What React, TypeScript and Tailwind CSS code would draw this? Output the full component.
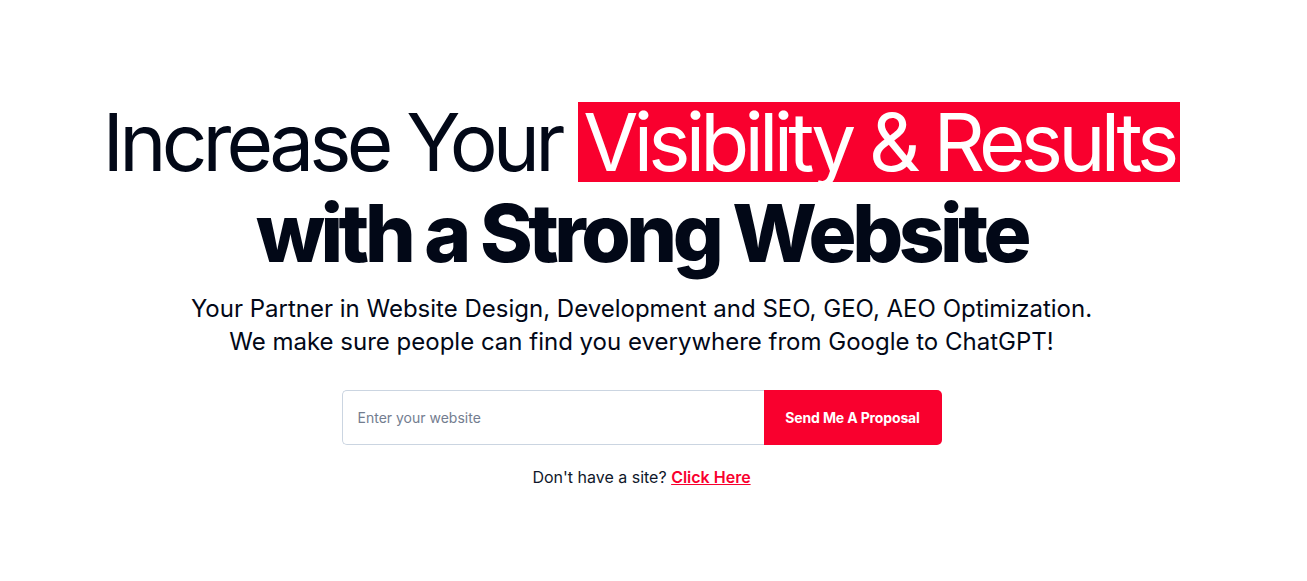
export default function App() {
  return (
    <div
      className="min-h-screen bg-white flex flex-col items-center pr-[24px] text-[#020817]"
      style={{ fontFamily: 'Inter, "Noto Sans", sans-serif' }}
    >
      <h1 className="mt-[96px] flex flex-col items-center text-center text-[80px] leading-[91px]">
        <span className="font-normal tracking-[-0.06em] whitespace-nowrap">
          Increase Your{' '}
          <span className="inline-block leading-none bg-[#f9002e] text-white pl-[5px] pr-[6px]">
            Visibility &amp; Results
          </span>
        </span>
        <span className="font-extrabold tracking-[-0.056em] whitespace-nowrap">with a Strong Website</span>
      </h1>
      <p className="mt-[14px] text-[24px] leading-[33px] text-center">
        Your Partner in Website Design, Development and SEO, GEO, AEO Optimization.
        <br />
        We make sure people can find you everywhere from Google to ChatGPT!
      </p>
      <form className="mt-[32px] flex w-[600px] h-[55px]" onSubmit={(e) => e.preventDefault()}>
        <input
          type="text"
          placeholder="Enter your website"
          className="flex-1 min-w-0 border border-[#cbd5e1] border-r-0 rounded-l-[5px] px-[15px] text-[14px] text-[#020817] placeholder:text-[#737d8f] outline-none"
        />
        <button
          type="submit"
          className="w-[178px] bg-[#f9002e] text-white text-[14px] font-bold rounded-r-[5px] tracking-[-0.01em]"
        >
          Send Me A Proposal
        </button>
      </form>
      <p className="mt-[20px] text-[16px] leading-[24px] text-[#0f172a]">
        Don&apos;t have a site?{' '}
        <a href="#" className="text-[#f9002e] font-semibold underline">
          Click Here
        </a>
      </p>
    </div>
  );
}
